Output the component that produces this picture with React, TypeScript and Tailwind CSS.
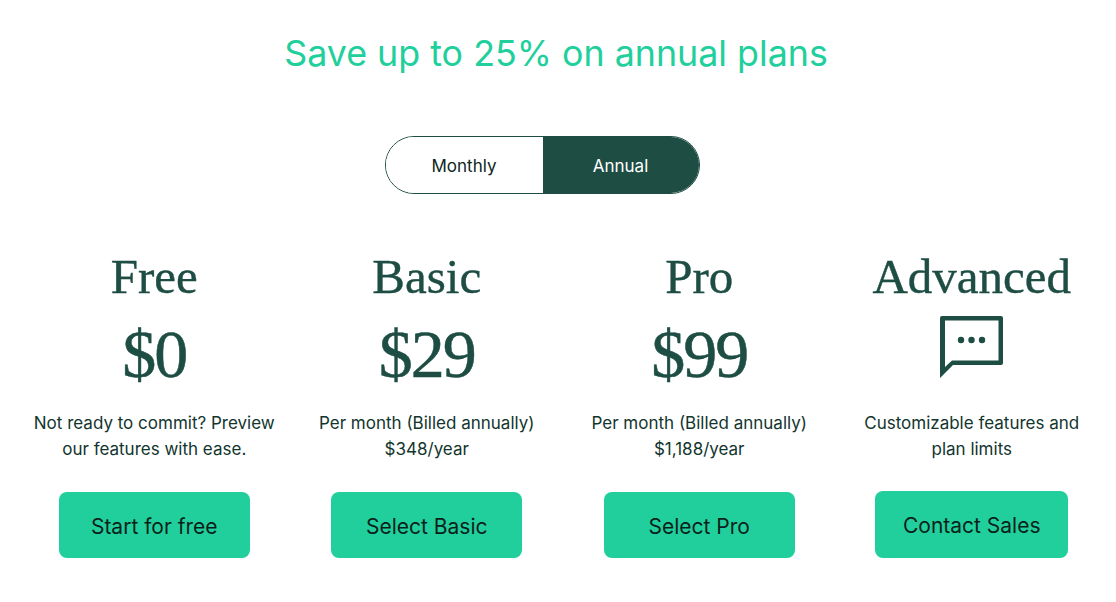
import React from 'react';

const sans = { fontFamily: '"Inter", "Liberation Sans", sans-serif' };
const serif = { fontFamily: '"Liberation Serif", serif' };

const plans = [
  { name: 'Free', price: '$0', lines: ['Not ready to commit? Preview', 'our features with ease.'], cta: 'Start for free' },
  { name: 'Basic', price: '$29', lines: ['Per month (Billed annually)', '$348/year'], cta: 'Select Basic' },
  { name: 'Pro', price: '$99', lines: ['Per month (Billed annually)', '$1,188/year'], cta: 'Select Pro' },
  { name: 'Advanced', price: null, lines: ['Customizable features and', 'plan limits'], cta: 'Contact Sales' },
];

function ChatIcon() {
  return (
    <svg width="64" height="63" viewBox="0 0 64 63" className="block" aria-hidden="true">
      <path
        fillRule="evenodd"
        fill="#1e4d44"
        d="M0 2 Q0 0 2 0 H61 Q63 0 63 2 V47 Q63 49 61 49 H13 L0 62 Z M5 4.500 V51 L12 44.500 H58.500 V4.500 Z"
      />
      <circle cx="21" cy="24" r="3.200" fill="#1e4d44" />
      <circle cx="31.500" cy="24" r="3.200" fill="#1e4d44" />
      <circle cx="42" cy="24" r="3.200" fill="#1e4d44" />
    </svg>
  );
}

export default function App() {
  return (
    <div className="w-[1116px] h-[602px] overflow-hidden bg-white pl-[18px] pr-[8px] pt-[30px]" style={sans}>
      <h1 className="text-center text-[35.8px] leading-[46px] text-[#21cf9c] pr-[14px]">Save up to 25% on annual plans</h1>

      <div className="flex justify-center mt-[60px] pr-[42px]">
        <div className="flex w-[315px] h-[58px] rounded-full border border-[#1e4d44] overflow-hidden text-[17px]">
          <div className="w-[157px] pt-[3px] flex items-center justify-center bg-white text-[#0c2620]">Monthly</div>
          <div className="flex-1 pt-[3px] flex items-center justify-center bg-[#1e4d44] text-white">Annual</div>
        </div>
      </div>

      <div className="grid grid-cols-4 mt-[56px]">
        {plans.map((plan) => (
          <div key={plan.name} className="flex flex-col items-center">
            <h2 className="text-[49px] leading-[54px] text-[#1e4d44] whitespace-nowrap [-webkit-text-stroke:0.4px_#1e4d44]" style={serif}>{plan.name}</h2>
            <div className="h-[76px] flex items-center justify-center mt-[5px]">
              {plan.price ? (
                <span className="pt-[14px] text-[68px] leading-[76px] text-[#1e4d44] tracking-[-2px] [-webkit-text-stroke:0.5px_#1e4d44]" style={serif}>{plan.price}</span>
              ) : (
                <ChatIcon />
              )}
            </div>
            <p className="mt-[25px] text-center text-[17px] leading-[26px] text-[#12352e] whitespace-nowrap">
              {plan.lines[0]}<br />{plan.lines[1]}
            </p>
            <button className={`rounded-[8px] pt-[3px] bg-[#21cf9c] text-[21px] text-[#0a1f1a] ${plan.name === 'Advanced' ? 'mt-[29px] h-[67px] w-[193px]' : 'mt-[30px] h-[66px] w-[191px]'}`}>
              {plan.cta}
            </button>
          </div>
        ))}
      </div>
    </div>
  );
}
